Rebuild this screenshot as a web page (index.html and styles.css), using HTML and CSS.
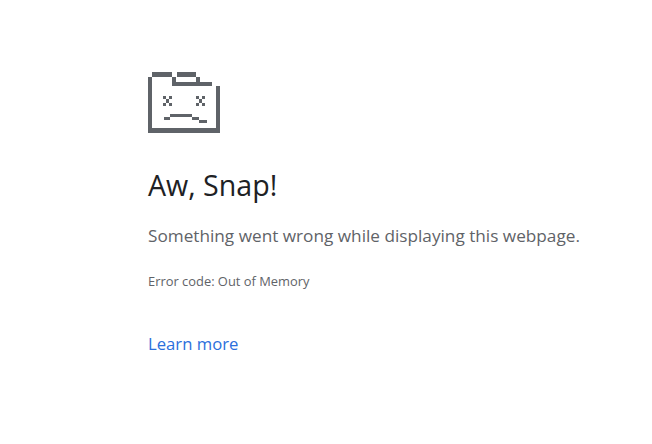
FILE: index.html
```html
<!DOCTYPE html>
<html lang="en">
<head>
  <meta charset="UTF-8" />
  <title>Aw, Snap!</title>
  <link rel="stylesheet" href="styles.css">
</head>
<body>
<div class="container">
  <svg class="sad-tab" viewBox="0 0 72 61" width="72" height="61" shape-rendering="crispEdges">
    <path d="M4 0h20v5H4zM29 0h19v5H29zM48 5h4v5h12v4H24V5h4v5h20z"/>
    <path d="M0 5h4v51h64V14h4v47H0z"/>
    <path d="M15 24h3v3h-3zM21 24h3v3h-3zM18 27h3v4h-3zM15 31h3v3h-3zM21 31h3v3h-3z"/>
    <path d="M48 24h3v3h-3zM54 24h3v3h-3zM51 27h3v4h-3zM48 31h3v3h-3zM54 31h3v3h-3z"/>
    <path d="M16 45h6v3h-6zM22 42h22v3H22zM44 45h7v3h-7zM51 48h8v3h-8z"/>
  </svg>
  <h1 class="title">Aw, Snap!</h1>
  <p class="message">Something went wrong while displaying this webpage.</p>
  <p class="error-code">Error code: Out of Memory</p>
  <a class="learn-more" href="#">Learn more</a>
</div>
</body>
</html>
```

FILE: styles.css
```css
* { box-sizing: border-box; }
body {
  margin: 0;
  background-color: #ffffff;
  font-family: "Open Sans", Arial, sans-serif;
}
.container {
  display: flex;
  flex-direction: column;
  align-items: flex-start;
  padding: 72px 0 0 148px;
}
.sad-tab {
  fill: #5f6368;
  margin-bottom: 34px;
}
.title {
  margin: 0;
  font-size: 28.6px;
  line-height: 36px;
  font-weight: 400;
  color: #202124;
}
.message {
  margin: 21px 0 0;
  font-size: 17.2px;
  line-height: 24px;
  color: #5f6368;
}
.error-code {
  margin: 25px 0 0;
  font-size: 12.9px;
  line-height: 16px;
  color: #5f6368;
}
.learn-more {
  margin-top: 43px;
  font-size: 16.7px;
  line-height: 24px;
  color: #2b6fdc;
  text-decoration: none;
}
```
